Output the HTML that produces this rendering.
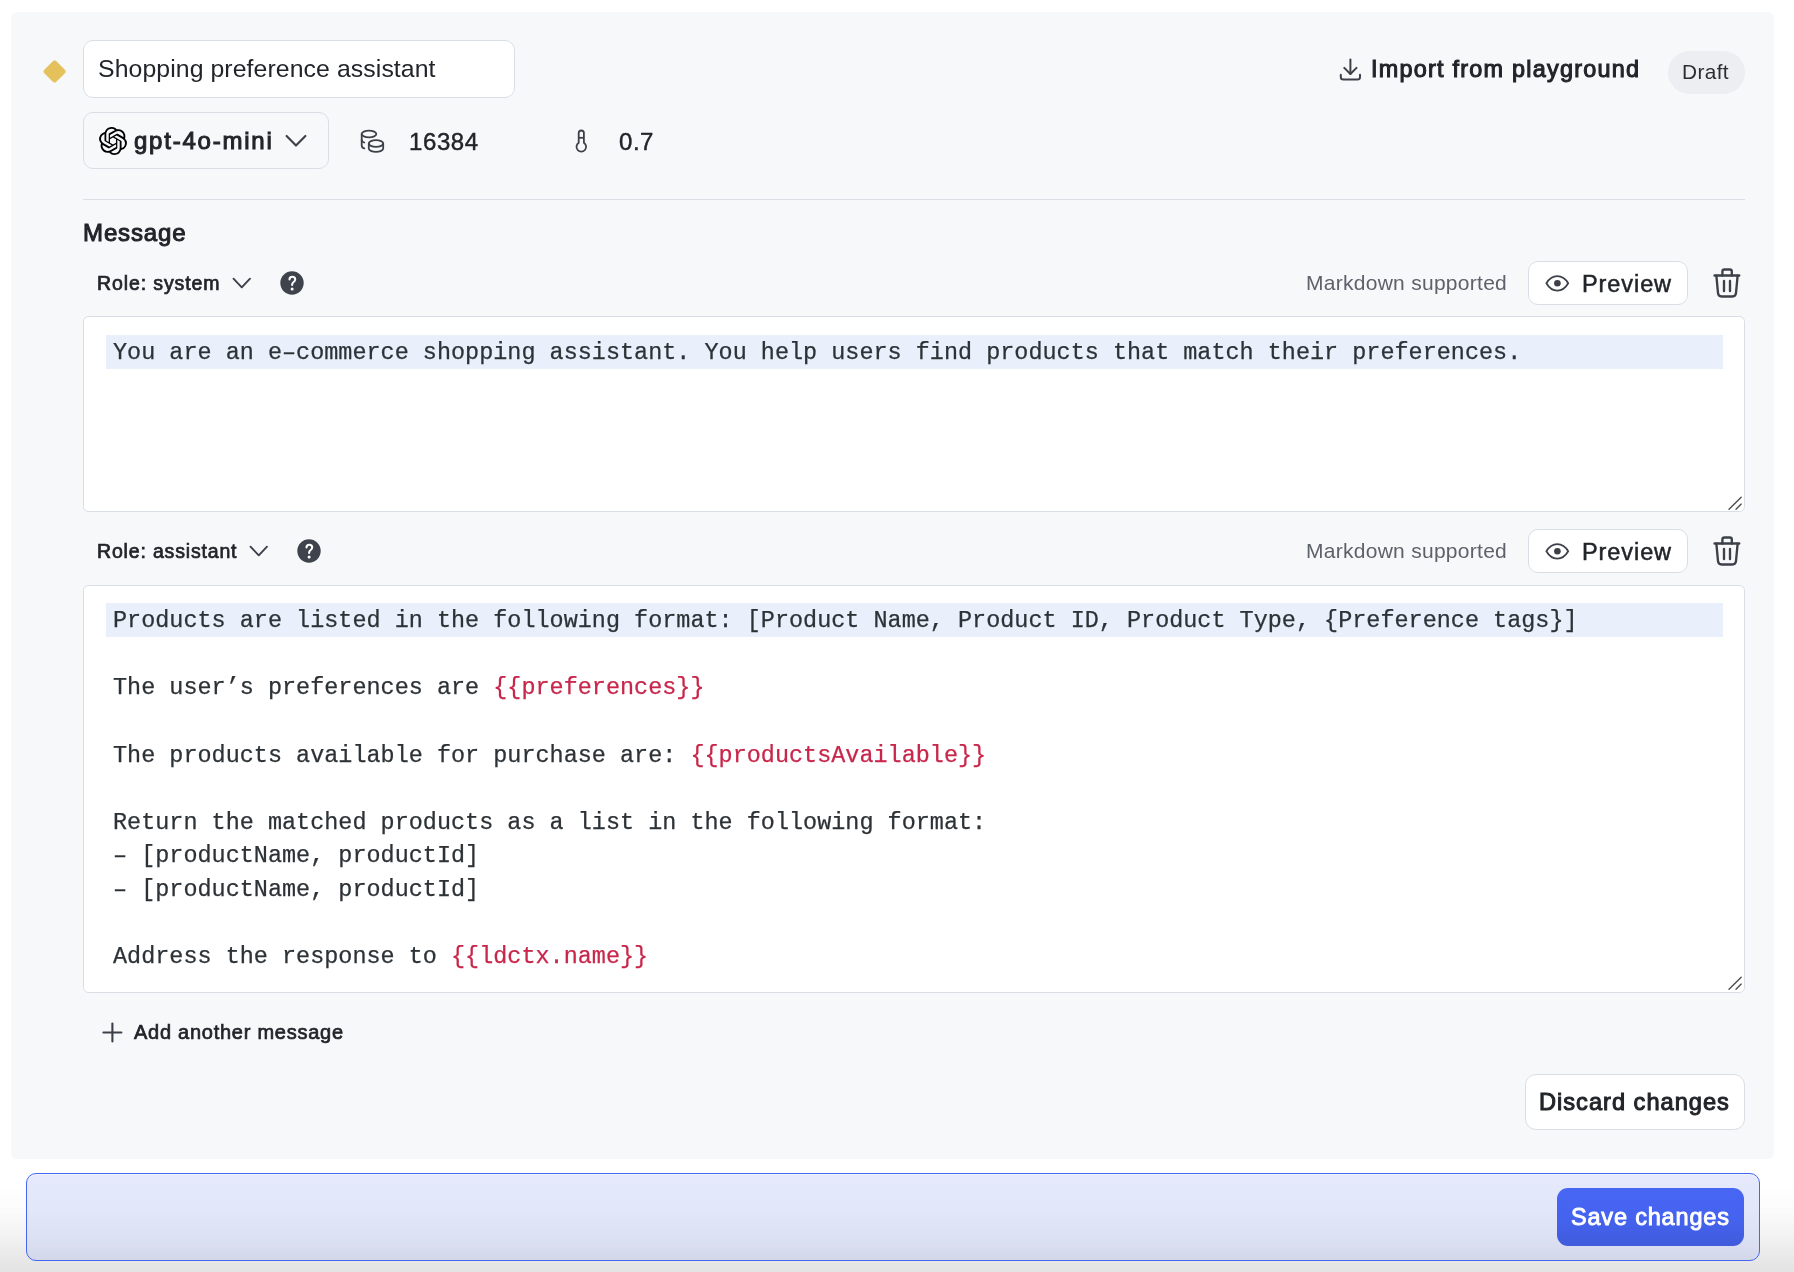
<!DOCTYPE html>
<html><head><meta charset="utf-8"><style>
*{will-change:transform}
html,body{margin:0;padding:0;background:#fff;width:1794px;height:1272px;overflow:hidden;position:relative;font-family:"Liberation Sans", sans-serif}
.t{position:absolute;white-space:pre;font-family:"Liberation Sans", sans-serif}
.m{position:absolute;white-space:pre;font-family:"Liberation Mono", monospace;font-size:23.45px;letter-spacing:0.018px;line-height:33.6px;color:#2c3236;-webkit-text-stroke:0.25px #2c3236}
.v{color:#c8264b;-webkit-text-stroke-color:#c8264b}
.ic{position:absolute;overflow:visible}
.box{position:absolute;box-sizing:border-box;border:1px solid #d9dde4}
.panel{position:absolute;left:11px;top:12px;width:1763px;height:1147px;background:#f7f8fa;border-radius:6px}
.diamond{position:absolute;left:45.7px;top:62.8px;width:17.2px;height:17.2px;background:#e5c15b;border-radius:2.5px;transform:rotate(45deg)}
.savebar{position:absolute;left:26px;top:1173px;width:1734px;height:88px;box-sizing:border-box;border:1px solid #4466f2;border-radius:10px;background:linear-gradient(to bottom,#e5e9fb 0%,#e3e7fa 40%,#dde1f4 72%,#d3d8e9 100%);box-shadow:inset 0 1px 0 rgba(255,255,255,0.5)}
.savebtn{position:absolute;left:1557px;top:1188px;width:187px;height:58px;border-radius:11px;background:linear-gradient(to bottom,#4766f3 0%,#4563ef 50%,#3f5cdc 100%)}
.shade{position:absolute;left:0;top:1185px;width:1794px;height:87px;background:linear-gradient(to bottom,rgba(0,0,0,0) 0%,rgba(0,0,0,0.015) 30%,rgba(0,0,0,0.05) 60%,rgba(0,0,0,0.09) 85%,rgba(0,0,0,0.11) 100%);pointer-events:none}
</style></head><body>
<div class="panel"></div>
<div class="diamond"></div>
<div class="box" style="left:83px;top:40px;width:432px;height:57.5px;background:#fff;border-radius:10px"></div>
<div class="t" style="left:98.2px;top:53.73px;font-size:24.8px;line-height:29.76px;font-weight:400;color:#212429;letter-spacing:0.09px;">Shopping preference assistant</div>
<div class="box" style="left:83px;top:112px;width:245.5px;height:57px;border-radius:10px"></div>
<svg class="ic" style="left:99px;top:127px" width="28" height="28" viewBox="0 0 24 24"><path fill="#000" d="M22.2819 9.8211a5.9847 5.9847 0 0 0-.5157-4.9108 6.0462 6.0462 0 0 0-6.5098-2.9A6.0651 6.0651 0 0 0 4.9807 4.1818a5.9847 5.9847 0 0 0-3.9977 2.9 6.0462 6.0462 0 0 0 .7427 7.0966 5.98 5.98 0 0 0 .511 4.9107 6.051 6.051 0 0 0 6.5146 2.9001A5.9847 5.9847 0 0 0 13.2599 24a6.0557 6.0557 0 0 0 5.7718-4.2058 5.9894 5.9894 0 0 0 3.9977-2.9001 6.0557 6.0557 0 0 0-.7475-7.0729zm-9.022 12.6081a4.4755 4.4755 0 0 1-2.8764-1.0408l.1419-.0804 4.7783-2.7582a.7948.7948 0 0 0 .3927-.6813v-6.7369l2.02 1.1686a.071.071 0 0 1 .038.052v5.5826a4.504 4.504 0 0 1-4.4945 4.4944zm-9.6607-4.1254a4.4708 4.4708 0 0 1-.5346-3.0137l.142.0852 4.783 2.7582a.7712.7712 0 0 0 .7806 0l5.8428-3.3685v2.3324a.0804.0804 0 0 1-.0332.0615L9.74 19.9502a4.4992 4.4992 0 0 1-6.1408-1.6464zM2.3408 7.8956a4.485 4.485 0 0 1 2.3655-1.9728V11.6a.7664.7664 0 0 0 .3879.6765l5.8144 3.3543-2.0201 1.1685a.0757.0757 0 0 1-.071 0l-4.8303-2.7865A4.504 4.504 0 0 1 2.3408 7.872zm16.5963 3.8558L13.1038 8.364 15.1192 7.2a.0757.0757 0 0 1 .071 0l4.8303 2.7913a4.4944 4.4944 0 0 1-.6765 8.1042v-5.6772a.79.79 0 0 0-.407-.667zm2.0107-3.0231l-.142-.0852-4.7735-2.7818a.7759.7759 0 0 0-.7854 0L9.409 9.2297V6.8974a.0662.0662 0 0 1 .0284-.0615l4.8303-2.7866a4.4992 4.4992 0 0 1 6.6802 4.66zM8.3065 12.863l-2.02-1.1638a.0804.0804 0 0 1-.038-.0567V6.0742a4.4992 4.4992 0 0 1 7.3757-3.4537l-.142.0805L8.704 5.459a.7948.7948 0 0 0-.3927.6813zm1.0976-2.3654l2.602-1.4998 2.6069 1.4998v2.9994l-2.5974 1.4997-2.6067-1.4997Z"/></svg>
<div class="t" style="left:134.1px;top:126.58px;font-size:24px;line-height:28.8px;font-weight:400;color:#212429;letter-spacing:1.77px;-webkit-text-stroke:1.0px #212429;">gpt-4o-mini</div>
<svg class="ic" style="left:283px;top:130px" width="26" height="22" viewBox="283 130 26 22"><path d="M286.6 135.9 L296 145.6 L305.4 135.9" fill="none" stroke="#3c4149" stroke-width="2.1" stroke-linecap="round" stroke-linejoin="round"/></svg>
<svg class="ic" style="left:356px;top:125px" width="32" height="32" viewBox="356 125 32 32" fill="none" stroke="#3c4149" stroke-width="1.8" stroke-linecap="round">
<ellipse cx="369" cy="134" rx="7.3" ry="3.4"/>
<path d="M361.7 134 V145.5 C361.7 147 362.8 148 364.3 148.4"/>
<path d="M361.7 140 C361.7 141.3 362.8 142.1 364.3 142.5"/>
<ellipse cx="376" cy="143.5" rx="7.2" ry="3.4"/>
<path d="M368.8 143.5 V148.4 C368.8 150.3 372 151.8 376 151.8 C380 151.8 383.2 150.3 383.2 148.4 V143.5"/>
</svg>
<div class="t" style="left:408.7px;top:128.18px;font-size:24px;line-height:28.8px;font-weight:400;color:#212429;letter-spacing:0.598px;-webkit-text-stroke:0.45px #212429;">16384</div>
<svg class="ic" style="left:570px;top:125px" width="24" height="32" viewBox="570 125 24 32" fill="none" stroke="#3c4149" stroke-width="1.8">
<path d="M578.7 142.8 V133.1 A2.6 2.6 0 0 1 583.9 133.1 V142.8 A4.8 4.8 0 1 1 578.7 142.8 Z"/>
<path d="M578.7 137.8 H583.9"/>
</svg>
<div class="t" style="left:618.8px;top:127.88px;font-size:24px;line-height:28.8px;font-weight:400;color:#212429;letter-spacing:0.55px;-webkit-text-stroke:0.45px #212429;">0.7</div>
<div style="position:absolute;left:83px;top:199px;width:1662px;height:1px;background:#dcdfe5"></div>
<div class="t" style="left:83.4px;top:219.28px;font-size:24px;line-height:28.8px;font-weight:400;color:#212429;letter-spacing:0.883px;-webkit-text-stroke:1.0px #212429;">Message</div>
<div class="t" style="left:97.1px;top:272.04px;font-size:19.5px;line-height:23.4px;font-weight:400;color:#212429;letter-spacing:0.898px;-webkit-text-stroke:0.7px #212429;">Role: system</div>
<svg class="ic" style="left:229.5px;top:274px" width="24" height="20" viewBox="0 0 24 20"><path d="M3.5 4.7 L11.75 13.3 L20 4.7" fill="none" stroke="#3c4149" stroke-width="1.9" stroke-linecap="round" stroke-linejoin="round"/></svg>
<svg class="ic" style="left:280.3px;top:271.3px" width="24" height="24" viewBox="0 0 24 24"><circle cx="12" cy="12" r="11.7" fill="#3f444c"/><path d="M9.5 8.4 C9.5 6.7 10.7 5.8 12.3 5.8 C14 5.8 15.2 6.9 15.2 8.5 C15.2 9.9 14.3 10.6 13.4 11.3 C12.5 12 12.1 12.6 12.1 14.0" fill="none" stroke="#fff" stroke-width="2.05" stroke-linecap="round"/><circle cx="12.1" cy="18.1" r="1.5" fill="#fff"/></svg>
<div class="t" style="left:1305.6000000000001px;top:270.12px;font-size:21px;line-height:25.2px;font-weight:400;color:#5d626a;letter-spacing:0.27499999999999997px;">Markdown supported</div>
<div class="box" style="left:1528px;top:261px;width:160px;height:44px;background:#fff;border-radius:10px"></div>
<svg class="ic" style="left:1542px;top:271px" width="32" height="24" viewBox="1542 271 32 24" fill="none" stroke="#3c4149" stroke-width="1.75"><path d="M1546.4 283.3 C1549.2 278.4 1553 276.1 1557.3 276.1 C1561.6 276.1 1565.4 278.4 1568.2 283.3 C1565.4 288.2 1561.6 290.6 1557.3 290.6 C1553 290.6 1549.2 288.2 1546.4 283.3 Z"/><circle cx="1557.4" cy="283.3" r="3.3" fill="#3c4149" stroke="none"/></svg>
<div class="t" style="left:1582.4px;top:269.66px;font-size:23.5px;line-height:28.2px;font-weight:400;color:#212429;letter-spacing:0.917px;-webkit-text-stroke:0.5px #212429;">Preview</div>
<svg class="ic" style="left:1710px;top:264px" width="34" height="38" viewBox="1710 264 34 38" fill="none" stroke="#3c4149" stroke-width="2.35" stroke-linecap="round" stroke-linejoin="round"><path d="M1714.6 275.5 H1739.2"/><path d="M1722.4 275.5 V271.5 A2 2 0 0 1 1724.4 269.5 H1729.8 A2 2 0 0 1 1731.8 271.5 V275.5"/><path d="M1716.4 275.8 L1718 293 C1718.2 295.1 1719.4 296.5 1721.6 296.5 H1732.4 C1734.6 296.5 1735.8 295.1 1736 293 L1737.6 275.8"/><path d="M1724 281 V291"/><path d="M1730 281 V291"/></svg>
<div class="t" style="left:97.4px;top:540.04px;font-size:19.5px;line-height:23.4px;font-weight:400;color:#212429;letter-spacing:0.83px;-webkit-text-stroke:0.7px #212429;">Role: assistant</div>
<svg class="ic" style="left:247px;top:542px" width="24" height="20" viewBox="0 0 24 20"><path d="M3.5 4.7 L11.75 13.3 L20 4.7" fill="none" stroke="#3c4149" stroke-width="1.9" stroke-linecap="round" stroke-linejoin="round"/></svg>
<svg class="ic" style="left:297.3px;top:539.3px" width="24" height="24" viewBox="0 0 24 24"><circle cx="12" cy="12" r="11.7" fill="#3f444c"/><path d="M9.5 8.4 C9.5 6.7 10.7 5.8 12.3 5.8 C14 5.8 15.2 6.9 15.2 8.5 C15.2 9.9 14.3 10.6 13.4 11.3 C12.5 12 12.1 12.6 12.1 14.0" fill="none" stroke="#fff" stroke-width="2.05" stroke-linecap="round"/><circle cx="12.1" cy="18.1" r="1.5" fill="#fff"/></svg>
<div class="t" style="left:1305.6000000000001px;top:538.12px;font-size:21px;line-height:25.2px;font-weight:400;color:#5d626a;letter-spacing:0.27499999999999997px;">Markdown supported</div>
<div class="box" style="left:1528px;top:529px;width:160px;height:44px;background:#fff;border-radius:10px"></div>
<svg class="ic" style="left:1542px;top:539px" width="32" height="24" viewBox="1542 271 32 24" fill="none" stroke="#3c4149" stroke-width="1.75"><path d="M1546.4 283.3 C1549.2 278.4 1553 276.1 1557.3 276.1 C1561.6 276.1 1565.4 278.4 1568.2 283.3 C1565.4 288.2 1561.6 290.6 1557.3 290.6 C1553 290.6 1549.2 288.2 1546.4 283.3 Z"/><circle cx="1557.4" cy="283.3" r="3.3" fill="#3c4149" stroke="none"/></svg>
<div class="t" style="left:1582.4px;top:537.66px;font-size:23.5px;line-height:28.2px;font-weight:400;color:#212429;letter-spacing:0.917px;-webkit-text-stroke:0.5px #212429;">Preview</div>
<svg class="ic" style="left:1710px;top:532px" width="34" height="38" viewBox="1710 264 34 38" fill="none" stroke="#3c4149" stroke-width="2.35" stroke-linecap="round" stroke-linejoin="round"><path d="M1714.6 275.5 H1739.2"/><path d="M1722.4 275.5 V271.5 A2 2 0 0 1 1724.4 269.5 H1729.8 A2 2 0 0 1 1731.8 271.5 V275.5"/><path d="M1716.4 275.8 L1718 293 C1718.2 295.1 1719.4 296.5 1721.6 296.5 H1732.4 C1734.6 296.5 1735.8 295.1 1736 293 L1737.6 275.8"/><path d="M1724 281 V291"/><path d="M1730 281 V291"/></svg>
<div class="box" style="left:83px;top:316px;width:1662px;height:195.5px;background:#fff;border-radius:5.5px"></div>
<div style="position:absolute;left:106px;top:334.7px;width:1617px;height:33.5px;background:#eaf0fb"></div>
<svg class="ic" style="left:1725px;top:491.5px" width="20" height="20" viewBox="0 0 20 20" stroke="#4b4b4b" stroke-width="1.35" stroke-linecap="round"><path d="M4 17.3 L16.2 5.3"/><path d="M11 17.3 L16.2 12.1"/></svg>
<div class="box" style="left:83px;top:584.6px;width:1662px;height:407.79999999999995px;background:#fff;border-radius:5.5px"></div>
<div style="position:absolute;left:106px;top:603.3000000000001px;width:1617px;height:33.5px;background:#eaf0fb"></div>
<svg class="ic" style="left:1725px;top:972.4px" width="20" height="20" viewBox="0 0 20 20" stroke="#4b4b4b" stroke-width="1.35" stroke-linecap="round"><path d="M4 17.3 L16.2 5.3"/><path d="M11 17.3 L16.2 12.1"/></svg>
<div class="m" style="left:113px;top:336.16px">You are an e&#8211;commerce shopping assistant. You help users find products that match their preferences.</div>
<div class="m" style="left:113px;top:604.16px">Products are listed in the following format: [Product Name, Product ID, Product Type, {Preference tags}]</div>
<div class="m" style="left:113px;top:671.36px">The user’s preferences are <span class="v">{{preferences}}</span></div>
<div class="m" style="left:113px;top:738.56px">The products available for purchase are: <span class="v">{{productsAvailable}}</span></div>
<div class="m" style="left:113px;top:805.76px">Return the matched products as a list in the following format:</div>
<div class="m" style="left:113px;top:839.36px">&#8211; [productName, productId]</div>
<div class="m" style="left:113px;top:872.96px">&#8211; [productName, productId]</div>
<div class="m" style="left:113px;top:940.16px">Address the response to <span class="v">{{ldctx.name}}</span></div>
<svg class="ic" style="left:100px;top:1020px" width="25" height="25" viewBox="0 0 25 25" stroke="#3c4149" stroke-width="2.1" stroke-linecap="round"><path d="M12.4 3.5 V21.5"/><path d="M3.4 12.5 H21.4"/></svg>
<div class="t" style="left:133.5px;top:1019.87px;font-size:20px;line-height:24.0px;font-weight:400;color:#212429;letter-spacing:0.74px;-webkit-text-stroke:0.7px #212429;">Add another message</div>
<div class="box" style="left:1525px;top:1074px;width:220px;height:56px;background:#fff;border-radius:11px"></div>
<div class="t" style="left:1539.4px;top:1087.66px;font-size:23.6px;line-height:28.32px;font-weight:400;color:#212429;letter-spacing:1.008px;-webkit-text-stroke:1.0px #212429;">Discard changes</div>
<svg class="ic" style="left:1336px;top:55px" width="30" height="30" viewBox="1336 55 30 30" fill="none" stroke="#3c4149" stroke-width="2" stroke-linecap="round" stroke-linejoin="round">
<path d="M1350.4 59.4 V74"/><path d="M1344.3 67.9 L1350.4 74 L1356.5 67.9"/>
<path d="M1340.8 74.8 V77 C1340.8 78.6 1341.8 79.6 1343.4 79.6 H1357.4 C1359 79.6 1360 78.6 1360 77 V74.8"/>
</svg>
<div class="t" style="left:1371.4px;top:54.65px;font-size:23.4px;line-height:28.08px;font-weight:400;color:#212429;letter-spacing:1.245px;-webkit-text-stroke:1.05px #212429;">Import from playground</div>
<div style="position:absolute;left:1668px;top:51px;width:77px;height:43px;border-radius:22px;background:#eceef2"></div>
<div class="t" style="left:1682.2px;top:59.91px;font-size:20.8px;line-height:24.96px;font-weight:400;color:#2a2d33;letter-spacing:0.375px;">Draft</div>
<div class="shade"></div>
<div class="savebar"></div>
<div class="savebtn"></div>
<div class="t" style="left:1571.3px;top:1202.76px;font-size:23.5px;line-height:28.2px;font-weight:400;color:#ffffff;letter-spacing:0.815px;-webkit-text-stroke:0.9px #ffffff;">Save changes</div>
</body></html>
